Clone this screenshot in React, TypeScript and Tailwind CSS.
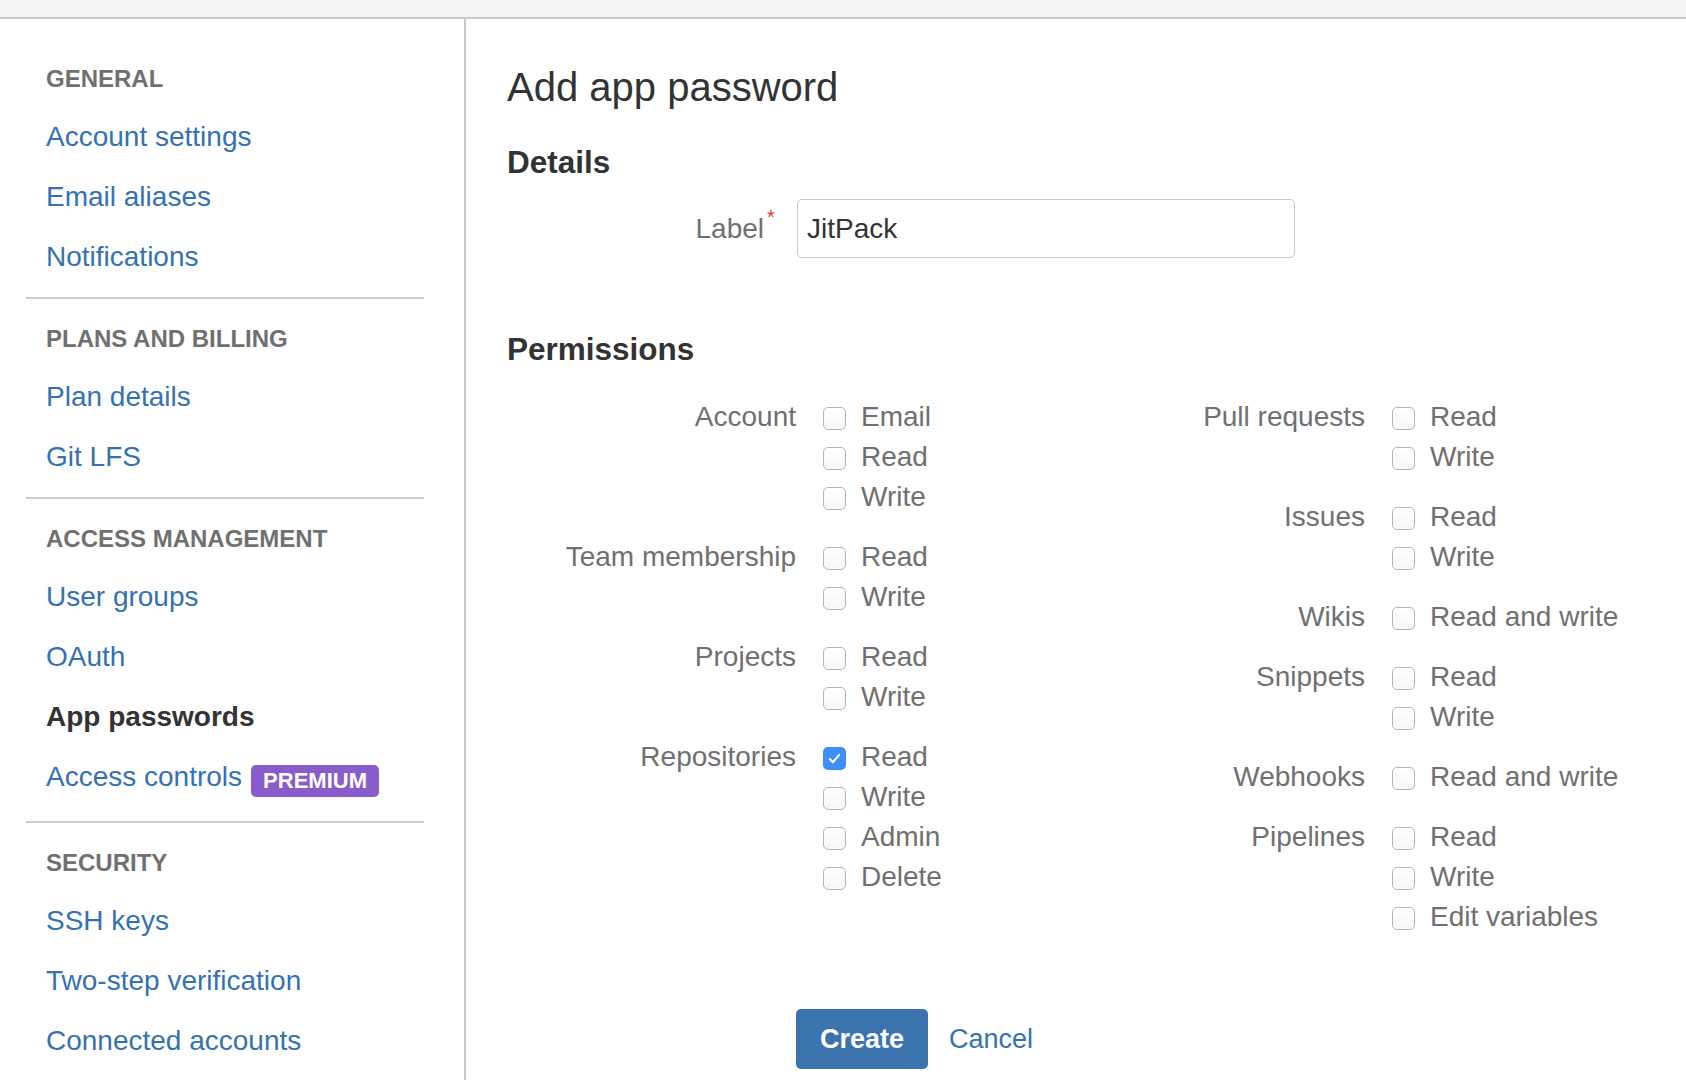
import React from "react";

type Section = {
  title: string;
  links: { label: string; active?: boolean; badge?: string }[];
  pb: string;
};

const sections: Section[] = [
  {
    title: "General",
    links: [{ label: "Account settings" }, { label: "Email aliases" }, { label: "Notifications" }],
    pb: "pb-[10px]",
  },
  {
    title: "Plans and billing",
    links: [{ label: "Plan details" }, { label: "Git LFS" }],
    pb: "pb-[10px]",
  },
  {
    title: "Access management",
    links: [
      { label: "User groups" },
      { label: "OAuth" },
      { label: "App passwords", active: true },
      { label: "Access controls", badge: "PREMIUM" },
    ],
    pb: "pb-[14px]",
  },
  {
    title: "Security",
    links: [{ label: "SSH keys" }, { label: "Two-step verification" }, { label: "Connected accounts" }],
    pb: "pb-0",
  },
];

type Group = { name: string; options: { label: string; checked?: boolean }[] };

const leftGroups: Group[] = [
  { name: "Account", options: [{ label: "Email" }, { label: "Read" }, { label: "Write" }] },
  { name: "Team membership", options: [{ label: "Read" }, { label: "Write" }] },
  { name: "Projects", options: [{ label: "Read" }, { label: "Write" }] },
  {
    name: "Repositories",
    options: [{ label: "Read", checked: true }, { label: "Write" }, { label: "Admin" }, { label: "Delete" }],
  },
];

const rightGroups: Group[] = [
  { name: "Pull requests", options: [{ label: "Read" }, { label: "Write" }] },
  { name: "Issues", options: [{ label: "Read" }, { label: "Write" }] },
  { name: "Wikis", options: [{ label: "Read and write" }] },
  { name: "Snippets", options: [{ label: "Read" }, { label: "Write" }] },
  { name: "Webhooks", options: [{ label: "Read and write" }] },
  { name: "Pipelines", options: [{ label: "Read" }, { label: "Write" }, { label: "Edit variables" }] },
];

function Checkbox({ checked }: { checked?: boolean }) {
  if (checked) {
    return (
      <span className="mt-[10px] flex h-[23px] w-[23px] shrink-0 items-center justify-center rounded-[5px] bg-[#3d8ef6]">
        <svg width="15" height="15" viewBox="0 0 16 16" fill="none">
          <path d="M3 8.6l3.2 3.4L13 4.2" stroke="#fff" strokeWidth="2.2" strokeLinecap="round" strokeLinejoin="round" />
        </svg>
      </span>
    );
  }
  return (
    <span className="mt-[10px] block h-[23px] w-[23px] shrink-0 rounded-[5px] border-[1.5px] border-[#b4b4b4] bg-gradient-to-b from-white to-[#f7f7f7]" />
  );
}

function PermissionColumn({ groups }: { groups: Group[] }) {
  return (
    <div className="flex flex-col gap-[20px]">
      {groups.map((g) => (
        <div key={g.name} className="grid grid-cols-[289px_1fr]">
          <div className="text-right leading-[40px] text-[#707070]">{g.name}</div>
          <div className="flex flex-col pl-[27px]">
            {g.options.map((o) => (
              <label key={o.label} className="flex h-[40px] items-start">
                <Checkbox checked={o.checked} />
                <span className="ml-[15px] leading-[40px] text-[#707070]">{o.label}</span>
              </label>
            ))}
          </div>
        </div>
      ))}
    </div>
  );
}

export default function App() {
  return (
    <div className="min-h-screen bg-white font-['Liberation_Sans',Arial,sans-serif] text-[28px] text-[#333]">
      <div className="h-[19px] border-b-2 border-[#c8c8c8] bg-[#f4f4f4]" />
      <div className="flex min-h-[1061px]">
        <aside className="w-[466px] shrink-0 border-r-2 border-[#c8c8c8] pl-[26px] pr-[40px]">
          {sections.map((s, i) => (
            <div
              key={s.title}
              className={`${i === 0 ? "pt-[40px]" : "pt-[20px]"} ${s.pb} ${
                i < sections.length - 1 ? "border-b-2 border-[#cccccc]" : ""
              }`}
            >
              <h3 className="h-[40px] pl-[20px] text-[24px] font-bold uppercase leading-[40px] text-[#707070]">
                {s.title}
              </h3>
              <ul className="mt-[8px]">
                {s.links.map((l) => (
                  <li key={l.label} className="flex h-[60px] items-center pl-[20px] leading-[60px]">
                    {l.active ? (
                      <span className="font-bold text-[#333]">{l.label}</span>
                    ) : (
                      <a href="#" className="text-[#3572b0]">
                        {l.label}
                      </a>
                    )}
                    {l.badge && (
                      <span className="ml-[9px] mt-[8px] flex h-[32px] items-center rounded-[5px] bg-[#8a5ccb] px-[12px] text-[22px] font-bold leading-none text-white">
                        {l.badge}
                      </span>
                    )}
                  </li>
                ))}
              </ul>
            </div>
          ))}
        </aside>

        <main className="flex-1 px-[41px] pt-[44px]">
          <h1 className="text-[40px] font-normal leading-[48px] text-[#333]">Add app password</h1>

          <h2 className="mt-[31px] text-[31.5px] font-bold leading-[40px] text-[#333]">Details</h2>
          <div className="mt-[17px] grid grid-cols-[290px_498px] items-center">
            <div className="pr-[33px] text-right text-[#707070]">
              <span className="relative">
                Label
                <span className="absolute left-full -top-[6px] ml-[3px] text-[20px] leading-none text-[#d04437]">*</span>
              </span>
            </div>
            <input
              defaultValue="JitPack"
              className="h-[59px] w-[498px] rounded-[5px] border-[1.5px] border-[#c8c8c8] px-[9px] text-[28px] text-[#333] outline-none"
            />
          </div>

          <h2 className="mt-[71px] text-[31.5px] font-bold leading-[40px] text-[#333]">Permissions</h2>
          <div className="mt-[28px] grid grid-cols-2">
            <PermissionColumn groups={leftGroups} />
            <PermissionColumn groups={rightGroups} />
          </div>

          <div className="mt-[72px] flex items-center pl-[289px]">
            <button
              type="button"
              className="h-[60px] rounded-[5px] bg-[#3b73af] px-[24px] text-[27px] font-bold text-white"
            >
              Create
            </button>
            <a href="#" className="ml-[21px] text-[27px] text-[#3572b0]">
              Cancel
            </a>
          </div>
        </main>
      </div>
    </div>
  );
}
